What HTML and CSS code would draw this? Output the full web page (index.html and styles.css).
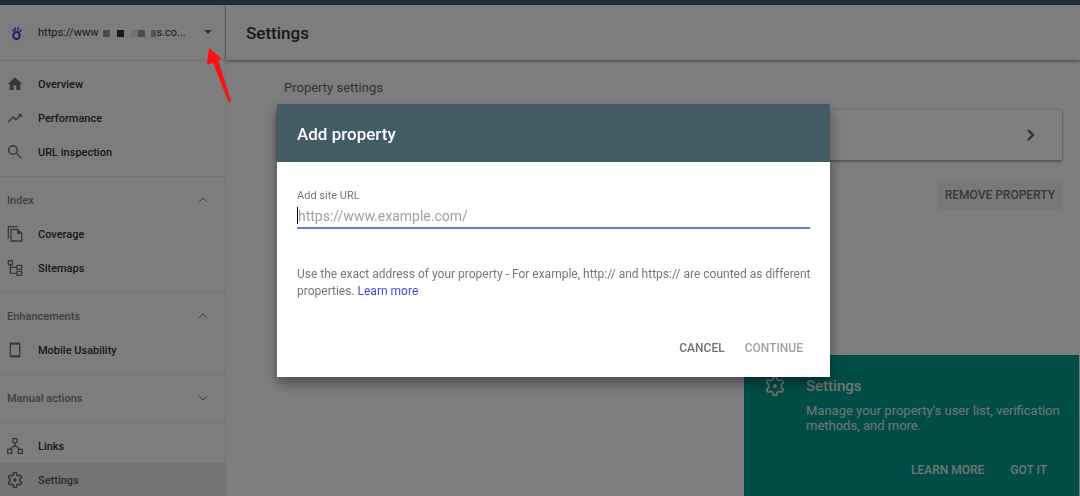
FILE: index.html
```html
<!DOCTYPE html>
<html lang="en">
<head>
<meta charset="utf-8">
<meta name="viewport" content="width=device-width, initial-scale=1">
<title>Settings</title>
<link rel="stylesheet" href="styles.css">
</head>
<body>
<div class="app">
  <div class="topbar"></div>
  <div class="shell">
    <aside class="sidebar">
      <button class="property" type="button">
        <svg class="property-logo" viewBox="0 0 20 22" aria-hidden="true">
          <rect width="20" height="22" fill="#f6f6fc"/>
          <g fill="none" stroke="#5b34c8" stroke-linecap="round">
            <ellipse cx="9.500" cy="13.500" rx="3.200" ry="3.600" stroke-width="2"/>
            <path d="M8.500 8 8 6M11 8 11.200 5.500M13 9.500 14 8M6.500 9 5.800 8" stroke-width="1.500"/>
          </g>
        </svg>
        <span class="property-name"><span>https://www</span>
          <svg class="mask" viewBox="0 0 58 8" aria-hidden="true"><path fill="#999" d="M5 1h7v7H5zM40 1h7v7h-7z"/><path fill="#333" d="M19 1h7v7h-7z"/><path fill="#e4e4e4" d="M33 1h7v7h-7z"/><path fill="#aaa" d="M53 1h5v7h-5z"/></svg><span>s.co...</span></span>
        <svg class="caret" viewBox="0 0 10 5" aria-hidden="true"><path d="M1 0h8L5 4z" fill="#666"/></svg>
      </button>
      <nav>
        <div class="group">
          <a class="item" href="#"><svg class="icon" viewBox="0 0 24 24"><path fill="currentColor" d="M10 21v-7h4v7h6v-9h3L12 2 1 12h3v9z"/></svg>Overview</a>
          <a class="item" href="#"><svg class="icon" viewBox="0 0 24 24"><path fill="currentColor" d="m16 6 2.290 2.290-4.880 4.880-4-4L1 17.600 2.400 19l7-7 4 4 6.300-6.290L22 12V6z"/></svg>Performance</a>
          <a class="item" href="#"><svg class="icon" viewBox="0 0 24 24"><g fill="none" stroke="currentColor" stroke-width="2.200"><circle cx="9" cy="9" r="6.500"/><path d="m14 14 7.500 7.500"/></g></svg>URL inspection</a>
        </div>
        <div class="group">
          <button class="section" type="button">Index<svg class="chevron" viewBox="0 0 10 10"><path d="m1 7 4-4 4 4"/></svg></button>
          <a class="item" href="#"><svg class="icon" viewBox="0 0 24 24"><g fill="none" stroke="currentColor" stroke-width="2"><path d="M2 19V1h14"/><path d="M6 5h10l6 6v11.500H6z"/></g><path fill="currentColor" d="M15 5v7h7z"/></svg>Coverage</a>
          <a class="item" href="#"><svg class="icon" viewBox="0 0 24 24"><g fill="none" stroke="currentColor" stroke-width="2"><path d="M2 1h6v6H2zM15 8h7v6h-7zM15 17h7v6h-7zM5 7v13h10M5 11h10"/></g></svg>Sitemaps</a>
        </div>
        <div class="group">
          <button class="section" type="button">Enhancements<svg class="chevron" viewBox="0 0 10 10"><path d="m1 7 4-4 4 4"/></svg></button>
          <a class="item" href="#"><svg class="icon" viewBox="0 0 24 24"><path fill="none" stroke="currentColor" stroke-width="2" d="M5 2h14v20H5z"/><path fill="currentColor" d="M5 1h14v3H5zM5 20h14v3H5z"/></svg>Mobile Usability</a>
        </div>
        <div class="group">
          <button class="section" type="button">Manual actions<svg class="chevron" viewBox="0 0 10 10"><path d="m1 3 4 4 4-4"/></svg></button>
        </div>
        <div class="group">
          <a class="item" href="#"><svg class="icon" viewBox="0 0 24 24"><g fill="none" stroke="currentColor" stroke-width="2"><path d="M9 1h6v6H9zM1 17h6v6H1zM17 17h6v6h-6zM12 7v5M4 17l8-6 8 6"/></g></svg>Links</a>
          <a class="item current" href="#" aria-current="page"><svg class="icon" viewBox="0 0 24 24"><path fill="none" stroke="currentColor" stroke-width="2" stroke-linejoin="round" d="m10 1h4l.6 3.300 2.400 1.400 3.200-1.200 2 3.500-2.600 2.200v3.600l2.600 2.200-2 3.500-3.200-1.200-2.400 1.400L14 23h-4l-.6-3.300L7 18.300l-3.200 1.200-2-3.500 2.600-2.200v-3.600L1.800 8l2-3.500L7 5.700l2.400-1.400z"/><circle cx="12" cy="12" r="2.500" fill="currentColor"/></svg>Settings</a>
        </div>
      </nav>
    </aside>
    <main class="main">
      <header class="main-header"><h1>Settings</h1></header>
      <section class="content">
        <h2>Property settings</h2>
        <button class="card" type="button" aria-label="Open property settings"><svg class="card-arrow" viewBox="0 0 10 12" aria-hidden="true"><path d="m2 1 5 5-5 5"/></svg></button>
        <button class="remove" type="button">REMOVE PROPERTY</button>
      </section>
    </main>
  </div>
</div>

<section class="toast">
  <svg class="toast-icon" viewBox="0 0 24 24" aria-hidden="true"><path fill="none" stroke="currentColor" stroke-width="2" stroke-linejoin="round" d="m10 1h4l.6 3.300 2.400 1.400 3.200-1.200 2 3.500-2.600 2.200v3.600l2.600 2.200-2 3.500-3.200-1.200-2.400 1.400L14 23h-4l-.6-3.300L7 18.300l-3.200 1.200-2-3.500 2.600-2.200v-3.600L1.800 8l2-3.500L7 5.700l2.400-1.400z"/><circle cx="12" cy="12" r="2.500" fill="currentColor"/></svg>
  <div class="toast-text">
    <h2>Settings</h2>
    <p>Manage your property's user list, verification methods, and more.</p>
  </div>
  <div class="toast-actions"><button type="button">LEARN MORE</button><button type="button">GOT IT</button></div>
</section>

<div class="overlay">
  <form class="dialog" role="dialog" aria-labelledby="dialog-title">
    <h2 class="dialog-title" id="dialog-title">Add property</h2>
    <div class="dialog-body">
      <label for="site-url">Add site URL</label>
      <div class="field"><span class="cursor"></span><input id="site-url" type="text" placeholder="https://www.example.com/"></div>
      <p>Use the exact address of your property - For example, http:// and https:// are counted as different properties. <a href="#">Learn more</a></p>
      <div class="dialog-actions"><button type="button">CANCEL</button><button type="submit" disabled>CONTINUE</button></div>
    </div>
  </form>
</div>

<svg class="pointer" viewBox="0 0 26 56" aria-hidden="true"><path fill="#ff1010" d="M4 0 17 11l-4 1 13 41-2 2L8 15l-6 2z"/></svg>
</body>
</html>
```
FILE: styles.css
```css
* { box-sizing: border-box; }

body {
  margin: 0;
  font-family: Roboto, "Liberation Sans", sans-serif;
  font-size: 11px;
  color: #333;
  background: #fafafa;
}

h1, h2, p { margin: 0; font-weight: 500; }
button { font: inherit; color: inherit; border: 0; padding: 0; background: none; }

.app { display: flex; flex-direction: column; height: 100vh; overflow: hidden; }
.topbar { flex: none; height: 5px; background: #435b65; }
.shell { display: flex; flex: 1; min-height: 0; }

.sidebar { flex: none; width: 226px; overflow: hidden; border-right: 1px solid #e6e6e6; }
.property {
  display: flex;
  align-items: center;
  width: 100%;
  height: 56px;
  padding: 0 12px 0 7px;
  border-bottom: 1px solid #e2e2e2;
  text-align: left;
}
.property-logo { width: 20px; height: 22px; margin-right: 11px; }
.property-name { display: flex; align-items: center; flex: 1; white-space: nowrap; }
.mask { width: 58px; height: 8px; }
.caret { width: 10px; height: 5px; }

.group { padding: 6px 0 7px; border-bottom: 1px solid #e6e6e6; }
.item {
  display: flex;
  align-items: center;
  gap: 15px;
  height: 34px;
  padding-left: 7px;
  font-weight: 500;
  color: #333;
  text-decoration: none;
}
.icon { width: 16px; height: 16px; color: #707070; }
.item.current { background: #e8e8e8; color: #4c5d66; }
.item.current .icon { color: #3c6880; }
.section {
  display: flex;
  align-items: center;
  justify-content: space-between;
  width: 100%;
  height: 34px;
  padding: 0 17px 0 7px;
  font-weight: 500;
  color: #808080;
}
.chevron { width: 10px; height: 10px; fill: none; stroke: #777; stroke-width: 1; }

.main { flex: 1; min-width: 0; }
.main-header {
  display: flex;
  align-items: center;
  height: 55px;
  padding-left: 20px;
  box-shadow: 0 1px 3px rgba(0, 0, 0, .5);
}
.main-header h1 { font-size: 17px; }
.content { display: flex; flex-direction: column; padding: 20px 18px 0 51px; }
.content h2 { padding-left: 7px; font-size: 13px; font-weight: 400; line-height: 16px; color: #666; }
.card {
  display: flex;
  align-items: center;
  justify-content: flex-end;
  height: 50px;
  margin-top: 14px;
  padding-right: 26px;
  background: #fff;
  box-shadow: 0 1px 3px rgba(0, 0, 0, .5);
}
.card-arrow { width: 10px; height: 12px; fill: none; stroke: #555; stroke-width: 2; }
.remove {
  align-self: flex-end;
  height: 30px;
  margin-top: 20px;
  padding: 0 7px;
  background: #f0f0f0;
  font-size: 12px;
  font-weight: 500;
  color: #707070;
}

.toast {
  position: fixed;
  right: 1px;
  bottom: 0;
  display: grid;
  grid-template-columns: 20px 1fr;
  align-content: space-between;
  column-gap: 21px;
  width: 335px;
  height: 141px;
  padding: 21px 12px 19px 21px;
  background: #009b8a;
  color: #e0eae8;
}
.toast-icon { width: 20px; height: 20px; }
.toast h2 { font-size: 15px; line-height: 20px; }
.toast p { padding-top: 7px; font-size: 13px; font-weight: 400; line-height: 15px; }
.toast-actions { grid-column: 1 / -1; display: flex; justify-content: flex-end; gap: 26px; padding-right: 20px; font-size: 12px; font-weight: 500; }

.overlay {
  position: fixed;
  inset: 0;
  display: grid;
  place-items: center;
  padding: 0 0 15px 27px;
  background: rgba(0, 0, 0, .5);
}
.dialog { width: 553px; background: #fff; box-shadow: 0 6px 12px rgba(0, 0, 0, .4); }
.dialog-title { padding: 3px 20px 0; font-size: 17px; line-height: 55px; color: #fff; background: #435b65; }
.dialog-body { padding: 26px 20px 19px; }
.dialog-body label { display: block; font-size: 11px; line-height: 16px; color: #777; }
.field { display: flex; align-items: center; height: 25px; border-bottom: 2px solid #5c80d8; }
.cursor { width: 1px; height: 17px; background: #000; }
.field input { flex: 1; padding: 0; border: 0; outline: 0; font: inherit; font-size: 14px; }
.field input::placeholder { color: #a0a0a0; opacity: 1; }
.dialog-body p { margin-right: -8px; padding-top: 37px; font-size: 12px; font-weight: 400; line-height: 17px; color: #777; }
.dialog-body a { color: #4545e6; text-decoration: none; }
.dialog-actions { display: flex; justify-content: flex-end; gap: 20px; padding: 38px 7px 0 0; font-size: 12px; font-weight: 500; line-height: 20px; color: #707070; }
.dialog-actions button:disabled { color: #a0a0a0; }

.pointer { position: fixed; left: 205px; top: 48px; width: 26px; height: 56px; }
```
